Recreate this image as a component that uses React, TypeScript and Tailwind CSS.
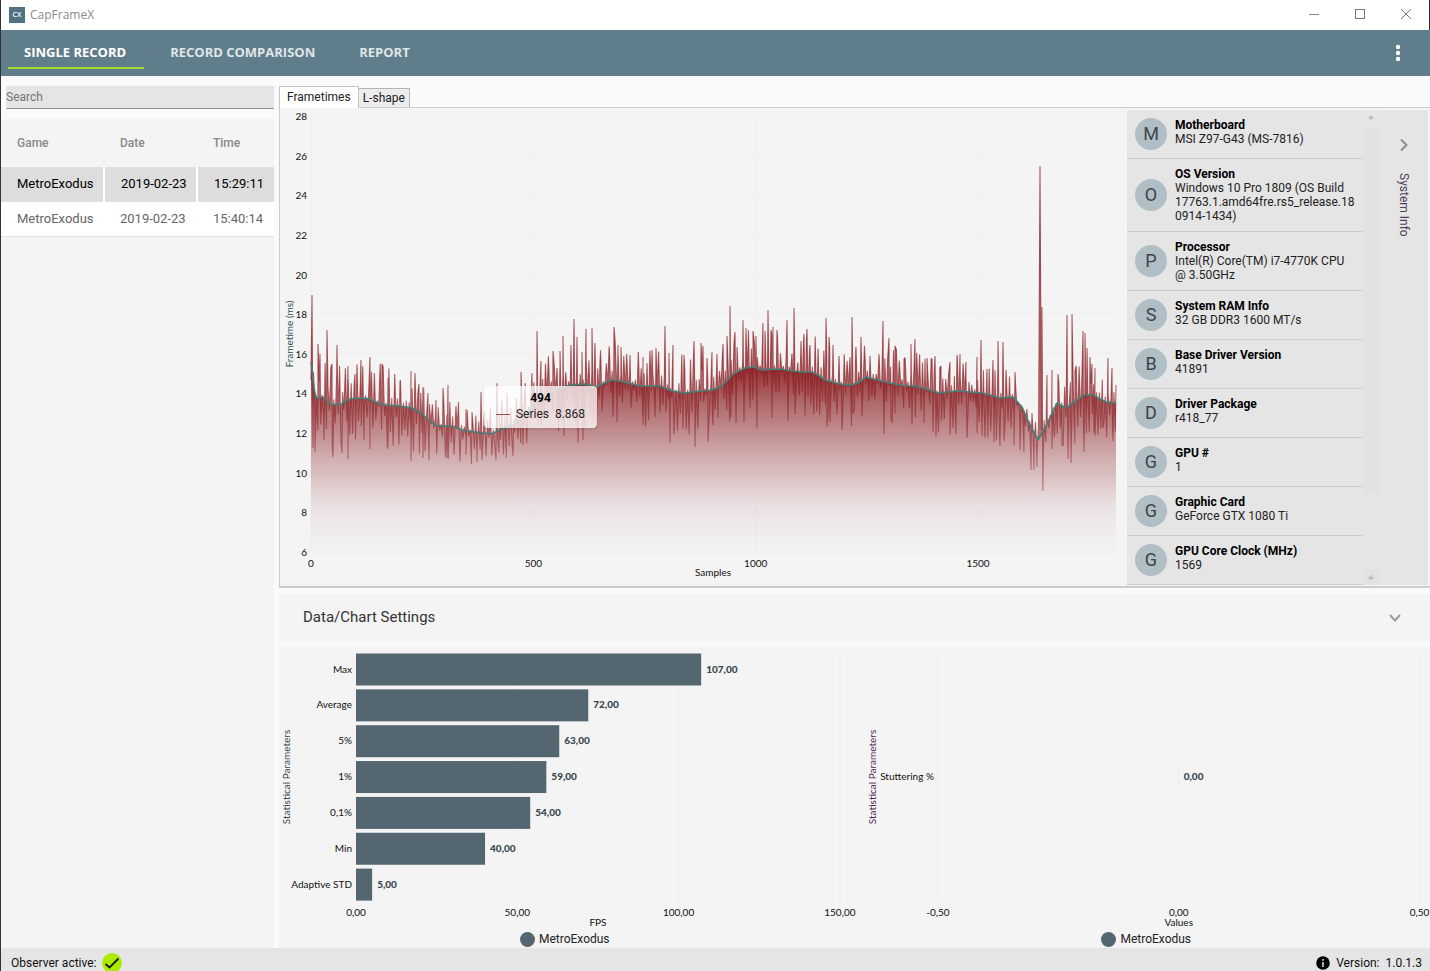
import React from "react";

type Point = [number, number];

/* Moving average of the frame times, in chart coordinates. */
const TREND: Point[] = [
  [311, 362], [312, 370], [314, 388], [316, 398], [323, 397], [330, 404], [340, 405], [350, 399],
  [360, 398], [370, 399], [375, 402], [385, 405], [400, 406], [412, 408], [422, 414], [430, 421],
  [437, 426], [450, 426], [455, 427], [462, 430], [475, 432], [491, 434], [500, 430], [515, 424],
  [530, 410], [545, 396], [560, 388], [570, 385], [585, 384], [597, 387], [600, 385], [612, 380],
  [620, 381], [640, 386], [660, 386], [672, 391], [685, 393], [700, 391], [712, 390], [722, 386],
  [733, 374], [745, 368], [755, 367], [760, 370], [780, 369], [800, 372], [812, 372], [818, 375],
  [825, 380], [840, 384], [850, 385], [858, 383], [866, 377], [885, 382], [905, 386], [915, 386],
  [930, 390], [938, 393], [957, 391], [983, 393], [1000, 398], [1013, 397], [1022, 407],
  [1030, 425], [1038, 440], [1046, 426], [1057, 403], [1066, 408], [1073, 403], [1084, 395],
  [1093, 395], [1106, 402], [1116, 403],
];

const PEAKS: Point[] = [
  [312, 295], [318, 344], [320, 354], [327, 330], [332, 364], [337, 345], [348, 366], [355, 374],
  [361, 360], [370, 357], [382, 364], [388, 378], [400, 381], [411, 371], [419, 384], [423, 387],
  [428, 393], [436, 400], [443, 388], [448, 385], [456, 406], [466, 409], [472, 412], [481, 392],
  [497, 383], [507, 393], [521, 372], [532, 373], [537, 331], [541, 361], [553, 351], [560, 351],
  [563, 336], [571, 345], [574, 319], [577, 337], [582, 352], [586, 329], [592, 328], [595, 343],
  [600, 361], [609, 350], [614, 327], [618, 345], [621, 347], [630, 355], [643, 357], [652, 350],
  [656, 348], [665, 326], [669, 353], [673, 345], [684, 355], [694, 341], [701, 343], [703, 346],
  [707, 358], [712, 352], [717, 354], [723, 344], [727, 336], [730, 306], [735, 332], [737, 347],
  [743, 320], [746, 328], [753, 331], [756, 336], [763, 323], [765, 331], [768, 310], [771, 330],
  [773, 327], [777, 330], [787, 320], [794, 308], [801, 341], [804, 334], [807, 329], [810, 345],
  [826, 318], [829, 337], [833, 345], [839, 356], [852, 317], [856, 347], [861, 337], [865, 357],
  [870, 356], [883, 321], [889, 338], [895, 346], [904, 359], [911, 344], [915, 339], [925, 359],
  [927, 358], [932, 359], [935, 356], [941, 366], [950, 362], [957, 355], [960, 354], [966, 362],
  [977, 357], [981, 340], [987, 369], [993, 360], [998, 341], [1003, 342], [1006, 370],
  [1015, 372], [1032, 413], [1042, 307], [1047, 375], [1052, 370], [1058, 374],
  [1067, 315], [1072, 314], [1075, 371], [1083, 331], [1085, 333], [1087, 348], [1090, 357],
  [1092, 364], [1095, 368], [1108, 358], [1112, 368],
];

const TROUGHS: Point[] = [
  [313, 448], [315, 452], [324, 440], [333, 457], [342, 453], [348, 459], [364, 440], [370, 449],
  [388, 447], [411, 461], [423, 458], [429, 460], [447, 458], [466, 455], [477, 462], [482, 460],
  [496, 460], [499, 453], [513, 456], [523, 445], [564, 436], [578, 443], [583, 440], [613, 417],
  [617, 422], [643, 425], [655, 417], [670, 443], [674, 434], [683, 429], [695, 447], [708, 442],
  [713, 425], [718, 418], [731, 417], [736, 423], [744, 422], [757, 428], [772, 418], [788, 421],
  [795, 414], [827, 427], [830, 422], [842, 430], [853, 414], [862, 416], [884, 434], [891, 418],
  [912, 425], [924, 423], [933, 432], [936, 437], [967, 438], [977, 433], [994, 442], [1000, 446],
  [1004, 441], [1014, 445], [1020, 450], [1024, 452], [1031, 470], [1034, 470], [1037, 467],
  [1052, 449], [1062, 445], [1068, 459], [1071, 463], [1084, 452], [1094, 433], [1103, 428],
  [1113, 441],
];

function trendAt(x: number): number {
  for (let i = 1; i < TREND.length; i++) {
    if (x <= TREND[i][0]) {
      const [x0, y0] = TREND[i - 1];
      const [x1, y1] = TREND[i];
      return y0 + ((y1 - y0) * (x - x0)) / (x1 - x0);
    }
  }
  return TREND[TREND.length - 1][1];
}

function buildSeries(): Point[] {
  let seed = 20190223;
  const random = () => {
    seed = (seed * 1103515245 + 12345) % 2147483648;
    return seed / 2147483648;
  };
  const points: Point[] = [];
  for (let x = 313.5; x < 1116; x += 1.45) {
    const busy = x > 1018 && x < 1046 ? 0.4 : x > 430 && x < 520 ? 0.75 : 1;
    const up = points.length % 2 === 0;
    const reach = up ? 2 + Math.pow(random(), 1.5) * 38 : 2 + Math.pow(random(), 1.3) * 42;
    points.push([x, trendAt(x) + (up ? -reach : reach) * busy]);
  }
  const kept = points.filter(([x]) => x < 1038 || x > 1045);
  const fixed: Point[] = [...PEAKS, ...TROUGHS, [311, 380], [1038.6, 425], [1040, 166], [1041.4, 430], [1042.8, 491], [1044, 420], [1116, 385]];
  return [...kept, ...fixed].sort((a, b) => a[0] - b[0]);
}

const toPath = (points: Point[]) =>
  points.map(([x, y], i) => (i ? "L" : "M") + x.toFixed(1) + " " + y.toFixed(1)).join("");

const SERIES_PATH = toPath(buildSeries());
const TREND_PATH = toPath(TREND);

const frametimeTicks = [28, 26, 24, 22, 20, 18, 16, 14, 12, 10, 8, 6];
const sampleTicks = [0, 500, 1000, 1500];

function FrametimeChart() {
  return (
    <svg viewBox="280 108 847 478" className="block h-full w-full font-['Lato',sans-serif] text-[10px]" role="img" aria-label="Frametimes">
      <defs>
        <linearGradient id="area" gradientUnits="userSpaceOnUse" x1="0" x2="0" y1="366" y2="552">
          <stop offset="0" stopColor="#8b1a1f" stopOpacity="0.92" />
          <stop offset="0.2" stopColor="#8b2226" stopOpacity="0.66" />
          <stop offset="0.5" stopColor="#8b2226" stopOpacity="0.33" />
          <stop offset="0.75" stopColor="#8b2226" stopOpacity="0.09" />
          <stop offset="1" stopColor="#8b2226" stopOpacity="0" />
        </linearGradient>
        <linearGradient id="line" gradientUnits="userSpaceOnUse" x1="0" x2="0" y1="366" y2="470">
          <stop offset="0" stopColor="#8b1f24" stopOpacity="0.7" />
          <stop offset="1" stopColor="#8b1f24" stopOpacity="0.5" />
        </linearGradient>
        <clipPath id="above">
          <path d={TREND_PATH + "L1116 116L311 116Z"} />
        </clipPath>
      </defs>
      {frametimeTicks.map((t) => {
        const y = 116 + ((28 - t) * 436) / 22;
        return (
          <g key={t}>
            <line x1="311" x2="1116" y1={y} y2={y} stroke="#efefef" />
            <text x="307" y={y + 4} textAnchor="end" fill="#111">{t}</text>
          </g>
        );
      })}
      {sampleTicks.map((t) => {
        const x = 311 + t * 0.4447;
        return (
          <g key={t}>
            <line x1={x} x2={x} y1="116" y2="552" stroke="#efefef" />
            <text x={x} y="567" textAnchor="middle" fill="#111">{t}</text>
          </g>
        );
      })}
      <path d={TREND_PATH + "L1116 552L311 552Z"} fill="url(#area)" />
      <path d={SERIES_PATH + "L1116 552L311 552Z"} fill="#8b1a1f" fillOpacity="0.6" clipPath="url(#above)" />
      <path d={SERIES_PATH} fill="none" stroke="url(#line)" strokeWidth="1.1" strokeLinejoin="bevel" />
      <path d={TREND_PATH} fill="none" stroke="#467f78" strokeWidth="1.6" strokeLinejoin="round" />
      <text x="713" y="576" textAnchor="middle" fill="#111">Samples</text>
      <text transform="translate(293 334) rotate(-90)" textAnchor="middle" fill="#2f4f4f">Frametime (ms)</text>
    </svg>
  );
}

const stats = [
  { label: "Max", value: 107 },
  { label: "Average", value: 72 },
  { label: "5%", value: 63 },
  { label: "1%", value: 59 },
  { label: "0,1%", value: 54 },
  { label: "Min", value: 40 },
  { label: "Adaptive STD", value: 5 },
];

function StatsChart() {
  return (
    <svg viewBox="279 646 575 284" preserveAspectRatio="xMinYMid meet" className="min-h-0 w-full flex-1 overflow-visible font-['Lato',sans-serif] text-[10px]" role="img" aria-label="Statistical parameters">
      {[0, 50, 100, 150].map((t) => {
        const x = 356 + t * 3.226;
        return (
          <g key={t}>
            <line x1={x} x2={x} y1="652" y2="903" stroke="#eeeeee" />
            <text x={x} y="916" textAnchor="middle" fill="#111">{t + ",00"}</text>
          </g>
        );
      })}
      {stats.map((s, i) => {
        const y = 653.5 + i * 35.85;
        return (
          <g key={s.label}>
            <rect x="356" y={y} width={s.value * 3.226} height="32" fill="#546770" />
            <text x="352" y={y + 19} textAnchor="end" fill="#111">{s.label}</text>
            <text x={361 + s.value * 3.226} y={y + 19} fontWeight="900" fill="#37474f">{s.value + ",00"}</text>
          </g>
        );
      })}
      <text x="598" y="926" textAnchor="middle" fill="#111">FPS</text>
      <text transform="translate(290 777) rotate(-90)" textAnchor="middle" fill="#37474f">Statistical Parameters</text>
    </svg>
  );
}

function StutterChart() {
  return (
    <svg viewBox="854 646 576 284" preserveAspectRatio="xMaxYMid meet" className="min-h-0 w-full flex-1 overflow-visible font-['Lato',sans-serif] text-[10px]" role="img" aria-label="Stuttering">
      {([["-0,50", 937], ["0,00", 1178], ["0,50", 1419]] as [string, number][]).map(([t, x]) => (
        <g key={t}>
          <line x1={x} x2={x} y1="652" y2="903" stroke="#eeeeee" />
          <text x={x} y="916" textAnchor="middle" fill="#111">{t}</text>
        </g>
      ))}
      <text x="933" y="780" textAnchor="end" fill="#111">Stuttering %</text>
      <text x="1183" y="780" fontWeight="900" fill="#37474f">0,00</text>
      <text x="1178" y="926" textAnchor="middle" fill="#111">Values</text>
      <text transform="translate(875 777) rotate(-90)" textAnchor="middle" fill="#4a2a55">Statistical Parameters</text>
    </svg>
  );
}

function Legend() {
  return (
    <div className="flex h-[18px] items-center justify-center gap-1 text-xs text-[#222]">
      <span className="size-[15px] rounded-full bg-[#546770]" />
      MetroExodus
    </div>
  );
}

const systemInfo = [
  ["Motherboard", "MSI Z97-G43 (MS-7816)"],
  ["OS Version", "Windows 10 Pro 1809 (OS Build 17763.1.amd64fre.rs5_release.180914-1434)"],
  ["Processor", "Intel(R) Core(TM) i7-4770K CPU @ 3.50GHz"],
  ["System RAM Info", "32 GB DDR3 1600 MT/s"],
  ["Base Driver Version", "41891"],
  ["Driver Package", "r418_77"],
  ["GPU #", "1"],
  ["Graphic Card", "GeForce GTX 1080 Ti"],
  ["GPU Core Clock (MHz)", "1569"],
];

function SystemInfo() {
  return (
    <aside className="mt-0.5 mr-0.5 mb-px flex w-[301px] shrink-0 overflow-hidden bg-[#e5e5e5]">
      <ul className="w-[236px]">
        {systemInfo.map(([name, value]) => (
          <li key={name} className="flex gap-2 border-b border-[#cccccc] p-2">
            <span className="flex size-8 shrink-0 items-center justify-center self-center rounded-full bg-[#b0bec5] text-lg text-[#3c4549]">{name[0]}</span>
            <div className="min-w-0 text-xs leading-[14px] text-[#222] wrap-anywhere">
              <p className="font-bold text-black">{name}</p>
              <p>{value}</p>
            </div>
          </li>
        ))}
      </ul>
      <div className="flex w-4 flex-col items-center bg-[#e6e6e6]">
        <svg viewBox="0 0 16 18" className="h-[18px] w-4 shrink-0"><path d="M5.5 8.500L8 6l2.500 2.500M8 6v4" fill="none" stroke="#b8b8b8" strokeWidth="1.200" /></svg>
        <div className="h-[366px] w-4 bg-[#e2e2e2]" />
        <svg viewBox="0 0 16 16" className="mt-auto size-4 shrink-0 bg-[#e2e2e2]"><path d="M5.500 8L8 10.500l2.500-2.500M8 6v4" fill="none" stroke="#b8b8b8" strokeWidth="1.200" /></svg>
      </div>
      <button className="flex flex-1 flex-col items-center gap-5 pt-[27px]">
        <svg viewBox="0 0 12 16" className="h-4 w-3"><path d="M3 2.500L8.500 8L3 13.500" fill="none" stroke="#8c8c8c" strokeWidth="2" /></svg>
        <span className="text-xs leading-4 text-[#51405c] [writing-mode:vertical-rl]">System Info</span>
      </button>
    </aside>
  );
}

const records = [
  ["MetroExodus", "2019-02-23", "15:29:11"],
  ["MetroExodus", "2019-02-23", "15:40:14"],
];

function RecordList() {
  return (
    <div className="flex w-[273px] shrink-0 flex-col">
      <div className="py-2.5 pl-[5px]">
        <input aria-label="Search" placeholder="Search" className="block h-[23px] w-full border-b border-[#8f8f8f] bg-[#e5e5e5] text-xs text-[#222] outline-none placeholder:text-[#757575]" />
      </div>
      <div className="flex-1 bg-[#f4f4f4]">
        <table className="w-full table-fixed border-collapse text-left text-[13px]">
          <colgroup>
            <col className="w-[103px]" />
            <col className="w-[93px]" />
            <col />
          </colgroup>
          <thead>
            <tr className="h-12 border-b border-[#dedede] text-xs text-[#8a8a8a]">
              {["Game", "Date", "Time"].map((h) => (
                <th key={h} className="pl-4 font-medium">{h}</th>
              ))}
            </tr>
          </thead>
          <tbody>
            {records.map((row, i) => (
              <tr key={row[2]} className={i === 0 ? "h-[34px] border-b border-[#e2e2e2] text-black" : "h-[35px] border-b border-[#e2e2e2] bg-white text-[#666]"}>
                {row.map((cell) => (
                  <td key={cell} className={i === 0 ? "border-r-2 border-white bg-[#dddddd] pl-4 last:border-r-0" : "pl-4"}>{cell}</td>
                ))}
              </tr>
            ))}
          </tbody>
        </table>
      </div>
    </div>
  );
}

export default function App() {
  return (
    <div className="flex h-screen min-h-[760px] flex-col overflow-hidden border-l border-[#333] bg-[#fafafa] font-['Roboto',sans-serif]">
      <header className="flex h-[30px] shrink-0 items-center bg-white pl-2 font-['Open_Sans',sans-serif]">
        <span className="flex size-4 items-center justify-center bg-[#4f7181] text-[7px] font-semibold text-white">CX</span>
        <h1 className="ml-[5px] text-xs text-[#8a8a8a]">CapFrameX</h1>
        <div className="ml-auto flex h-full border-r border-[#333] pb-0.5">
          <button aria-label="Minimize" className="flex w-[46px] items-center justify-center"><svg viewBox="0 0 10 10" className="size-2.5"><path d="M0 5.500H10" stroke="#888" /></svg></button>
          <button aria-label="Maximize" className="flex w-[46px] items-center justify-center"><svg viewBox="0 0 10 10" className="size-2.5"><rect x=".5" y=".5" width="9" height="9" fill="none" stroke="#777" /></svg></button>
          <button aria-label="Close" className="flex w-[46px] items-center justify-center"><svg viewBox="0 0 10 10" className="size-2.5"><path d="M0 0L10 10M10 0L0 10" stroke="#777" /></svg></button>
        </div>
      </header>

      <nav className="flex h-[46px] shrink-0 items-stretch gap-[10px] bg-[#607d8b] px-[7px] font-['Open_Sans',sans-serif] text-[13px] font-bold text-[#dfe5e8]">
        <button className="relative pr-[18px] pl-4 text-white">
          SINGLE RECORD
          <span className="absolute inset-x-0 bottom-[7px] h-0.5 bg-[#a4d930]" />
        </button>
        <button className="pr-[18px] pl-4">RECORD COMPARISON</button>
        <button className="pr-[18px] pl-4">REPORT</button>
        <button aria-label="More options" className="ml-auto w-[50px]">
          <svg viewBox="0 0 8 18" className="mx-auto h-[18px] w-2" fill="#fff"><circle cx="4" cy="3" r="2.200" /><circle cx="4" cy="9" r="2.200" /><circle cx="4" cy="15" r="2.200" /></svg>
        </button>
      </nav>

      <div className="flex min-h-0 flex-1 gap-[5px]">
        <RecordList />
        <main className="flex min-w-0 flex-1 flex-col pt-2.5">
          <div className="flex h-[21px] shrink-0 items-end text-xs text-[#222]" role="tablist">
            <button role="tab" aria-selected="true" className="relative z-10 -mb-px h-[22px] border border-b-0 border-[#c4c4c4] bg-white px-[7px] pb-0.5">Frametimes</button>
            <button role="tab" className="h-[19px] border border-b-0 border-l-0 border-[#b4b4b4] bg-[#ececec] px-1">L-shape</button>
          </div>
          <section className="flex min-h-0 flex-1 border border-r-0 border-b-2 border-[#cccccc] bg-[#f4f4f4]">
            <div className="relative min-h-0 min-w-0 flex-1">
              <FrametimeChart />
              <div className="absolute top-[278px] left-[204px] h-[42px] w-[113px] rounded-sm bg-white/75 text-xs leading-4 text-[#222] shadow-sm">
                <p className="pt-1 text-center font-bold text-black">494</p>
                <p className="flex items-center justify-center gap-[6px]">
                  <span className="h-px w-3.5 bg-[#a34a4e]" />
                  <span>Series</span>
                  <span>8.868</span>
                </p>
              </div>
            </div>
            <SystemInfo />
          </section>
          <button className="mt-1.5 flex h-[47px] shrink-0 items-center justify-between bg-[#f4f4f4] pr-7 pl-6 text-[15px] text-[#333]">
            Data/Chart Settings
            <svg viewBox="0 0 14 10" className="h-2.5 w-3.5"><path d="M2 2l5 5.500L12 2" fill="none" stroke="#9a9a9a" strokeWidth="2" /></svg>
          </button>
          <section className="mt-[5px] flex h-[302px] shrink-0 bg-[#f4f4f4]">
            <div className="flex min-w-0 flex-1 flex-col">
              <StatsChart />
              <div className="pr-1"><Legend /></div>
            </div>
            <div className="flex min-w-0 flex-1 flex-col">
              <StutterChart />
              <div className="pl-2"><Legend /></div>
            </div>
          </section>
        </main>
      </div>

      <footer className="flex h-[23px] shrink-0 items-start justify-between overflow-hidden bg-[#e5e5e5] pt-[5px] pr-2 pl-2.5 text-xs leading-[20px] text-[#111]">
        <p className="flex items-center gap-[5px]">
          Observer active:
          <svg viewBox="0 0 20 20" className="size-5"><circle cx="10" cy="10" r="10" fill="#aeea00" /><path d="M3.500 11L7.500 14.500L16.500 5.500" fill="none" stroke="#1c1c1c" strokeWidth="1.8" /></svg>
        </p>
        <p className="flex items-center gap-1.5">
          <svg viewBox="0 0 14 14" className="size-3.5"><circle cx="7" cy="7" r="6.800" fill="#000" /><path d="M7 3v1.800M7 6v5" stroke="#e5e5e5" strokeWidth="1.500" /></svg>
          <span>Version:</span>
          <span>1.0.1.3</span>
        </p>
      </footer>
    </div>
  );
}
